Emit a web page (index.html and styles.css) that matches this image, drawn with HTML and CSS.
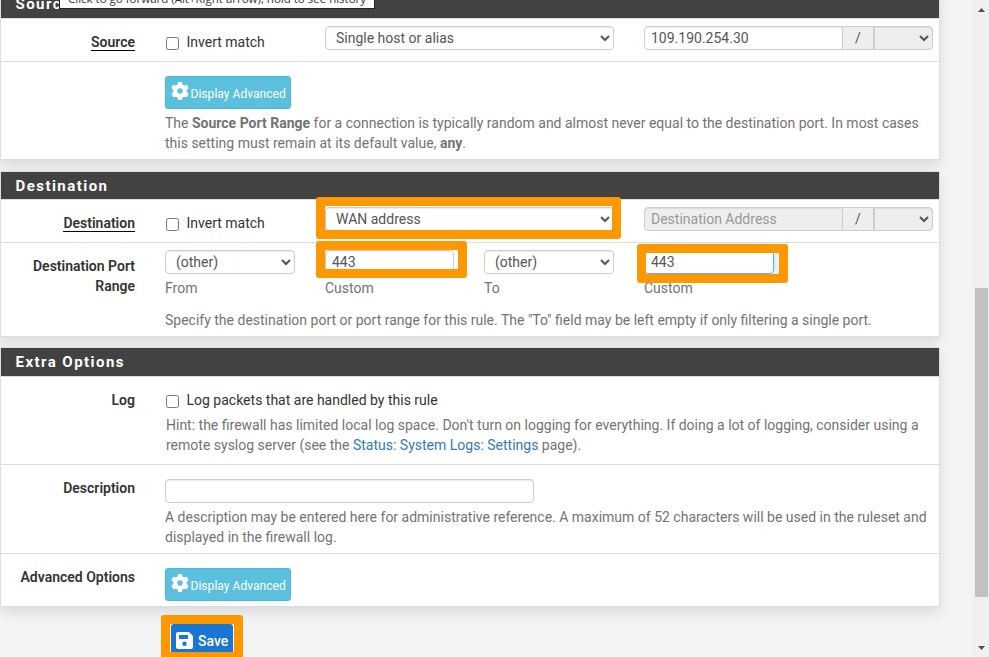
FILE: index.html
```html
<!DOCTYPE html>
<html lang="en">
<head>
<meta charset="utf-8">
<title>Firewall rule</title>
<link rel="stylesheet" href="styles.css">
</head>
<body>
<svg class="defs" width="0" height="0"><defs>
<symbol id="gear" viewBox="0 0 24 24"><path fill-rule="evenodd" d="M9.300 2.200 9.500 0h5l.8 3.200 2.100 1.300 3.600-.7 2.500 4.300-2.500 2.600v2.600l2.500 2.600-2.500 4.300-3.600-.7-2.100 1.300-.8 3.200h-5l-.8-3.200-2.100-1.300-3.600.7L.5 15.900 3 13.300v-2.600L.5 8.100 3 3.800l3.600.7 2.100-1.300zM12 8.300a3.700 3.700 0 1 0 0 7.400 3.700 3.700 0 0 0 0-7.400z"/></symbol>
</defs></svg>
<div class="page">
<main class="content">
  <section class="panel first">
    <h2>Source</h2>
    <div class="row address">
      <label class="name"><span class="ref">Source</span></label>
      <label class="check"><input type="checkbox"><span>Invert match</span></label>
      <select class="wide"><option>Single host or alias</option></select>
      <div class="group"><input type="text" value="109.190.254.30"><span class="addon">/</span><select disabled></select></div>
    </div>
    <div class="row advanced">
      <span class="name"></span>
      <div class="body">
        <button class="info"><svg><use href="#gear"/></svg><span>Display Advanced</span></button>
        <p class="help">The <b>Source Port Range</b> for a connection is typically random and almost never equal to the destination port. In most cases<br>this setting must remain at its default value, <b>any</b>.</p>
      </div>
    </div>
  </section>

  <section class="panel">
    <h2>Destination</h2>
    <div class="row address">
      <label class="name"><span class="ref">Destination</span></label>
      <label class="check"><input type="checkbox"><span>Invert match</span></label>
      <select class="wide"><option>WAN address</option></select>
      <div class="group"><input type="text" placeholder="Destination Address" disabled><span class="addon">/</span><select disabled></select></div>
    </div>
    <div class="row ports">
      <label class="name">Destination Port<br>Range</label>
      <div class="port"><select><option>(other)</option></select><span class="help">From</span></div>
      <div class="port"><input type="text" value="443"><span class="help">Custom</span></div>
      <div class="port"><select><option>(other)</option></select><span class="help">To</span></div>
      <div class="port"><input type="text" class="focused" value="443"><span class="help">Custom</span></div>
      <p class="help note">Specify the destination port or port range for this rule. The "To" field may be left empty if only filtering a single port.</p>
    </div>
  </section>

  <section class="panel extra">
    <h2>Extra Options</h2>
    <div class="row log">
      <label class="name">Log</label>
      <div class="body">
        <label class="check"><input type="checkbox"><span>Log packets that are handled by this rule</span></label>
        <p class="help">Hint: the firewall has limited local log space. Don't turn on logging for everything. If doing a lot of logging, consider using a<br>remote syslog server (see the <a href="#">Status: System Logs: Settings</a> page).</p>
      </div>
    </div>
    <div class="row description">
      <label class="name">Description</label>
      <div class="body">
        <input type="text">
        <p class="help">A description may be entered here for administrative reference. A maximum of 52 characters will be used in the ruleset and<br>displayed in the firewall log.</p>
      </div>
    </div>
    <div class="row options">
      <span class="name">Advanced Options</span>
      <div class="body"><button class="info"><svg><use href="#gear"/></svg><span>Display Advanced</span></button></div>
    </div>
  </section>
  <button class="save"><svg viewBox="0 0 17 17"><path fill-rule="evenodd" d="M2 0h11l4 4v11a2 2 0 0 1-2 2H2a2 2 0 0 1-2-2V2a2 2 0 0 1 2-2zM3 3v4h9V3zM8.500 9.500a2.200 2.200 0 1 0 0 4.400 2.200 2.200 0 0 0 0-4.400z"/></svg>Save</button>
</main>
<aside class="scrollbar">
  <svg viewBox="0 0 7 4"><path d="M3.500 0 7 4H0z"/></svg>
  <div class="thumb"></div>
  <svg viewBox="0 0 7 4"><path d="M0 0h7L3.500 4z"/></svg>
</aside>
</div>
<div class="mark mark-address"></div>
<div class="mark mark-from"></div>
<div class="mark mark-to"></div>
<div class="mark mark-save"></div>
<div class="tooltip">Click to go forward (Alt+Right arrow), hold to see history</div>
</body>
</html>
```

FILE: styles.css
```css
* { box-sizing: border-box; }
html, body { margin: 0; height: 657px; overflow: hidden; }
body { position: relative; background: #f4f4f4; color: #333; font: 14px/20px Roboto, sans-serif; }
.defs { position: absolute; }
.page { display: flex; height: 657px; overflow: hidden; }
.content { width: 940px; }
.panel { margin: 0 0 11px; border: 1px solid #ddd; background: #fff; box-shadow: 0 6px 12px rgba(0,0,0,.1); }
.panel.first { margin-top: -10px; border-top: 0; }
h2 { margin: 0; height: 28px; padding: 0 14.5px; border-bottom: 1px solid #ddd; background: #424242; background-clip: padding-box; color: #fff; font-size: 15px; line-height: 28px; font-weight: 700; letter-spacing: 1.45px; }
.first h2 { height: 29px; line-height: 29px; }
.extra h2 { height: 29px; line-height: 28px; }
.row { display: grid; grid-template-columns: 134px 130px 289px 289px; column-gap: 30px; align-items: start; align-content: start; border-bottom: 1px solid #ddd; white-space: nowrap; }
.row:last-child { border-bottom: 0; }
.name { text-align: right; font-weight: 600; }
.ref { display: inline-block; line-height: 16px; border-bottom: 1px solid #000; }
.body { grid-column: 2 / -1; }
.check { display: flex; align-items: center; }
.check input { width: 13px; height: 13px; margin: 2px 7.5px 0 1px; }
.help { margin: 0; color: #737373; }
a { color: #337ab7; text-decoration: none; }
input[type=text], select { display: block; width: 100%; height: 24px; margin: 0; border: 1px solid #ccc; border-radius: 4px; background: #fff; color: #555; font: inherit; box-shadow: inset 0 1px 1px rgba(0,0,0,.075); outline: 0; }
input[type=text] { padding: 0 6px; }
select { padding: 0 2px 0 6px; }
input::placeholder { color: #999; }
input:disabled, select:disabled { background-color: #eee; opacity: 1; }
.address { height: 43px; }
.address .name, .address > .check { height: 20px; margin-top: 13px; }
.address > select, .group { margin-top: 7px; }
.group { display: flex; }
.group input[type=text] { width: 199px; border-radius: 4px 0 0 4px; }
.addon { width: 31px; height: 24px; border: solid #ccc; border-width: 1px 1px 1px 0; background: #eee; color: #555; text-align: center; line-height: 22px; }
.group select { width: 59px; border-radius: 0 4px 4px 0; }
.advanced { height: 97px; padding-top: 14px; }
button { font-family: inherit; cursor: pointer; }
.info { display: flex; align-items: center; width: 126px; height: 33px; padding: 2px 0 0 5px; border: 1px solid #46b8da; border-radius: 3px; background: #5bc0de; color: #fff; font-size: 12px; font-weight: 400; letter-spacing: .04px; white-space: nowrap; }
.info svg { width: 18px; height: 18px; margin: -6px 2px 0 -.5px; fill: #fff; flex: none; }
.advanced .help { margin-top: 4px; }
.ports { grid-template-columns: 134px 130px 129px 130px 130px; height: 93px; padding-top: 7px; }
.ports .name { margin-top: 6px; height: 40px; }
.port { height: 49px; }
.port .help { display: block; margin-top: 4px; }
.ports .note { grid-column: 2 / -1; margin-top: 11px; }
.port .focused { border-color: #66afe9; box-shadow: inset 0 1px 1px rgba(0,0,0,.075), 0 0 8px rgba(102,175,233,.6); }
.panel.extra { margin-top: -1px; }
.log { height: 88px; padding-top: 13px; }
.log .check input { margin-top: 3px; }
.log .help { margin: 5px 0 0 1px; }
.description { height: 89px; padding-top: 14px; }
.description .name { margin-top: -1px; }
.description input[type=text] { width: 369px; }
.description .help { margin-top: 4px; }
.options { height: 52px; padding-top: 14px; }
.options .name { margin-top: -1px; }
.save { display: flex; align-items: center; width: 62px; height: 33px; margin: 17px 0 0 171px; padding: 0 0 0 5px; border: 0; border-radius: 3px; background: #1976d2; color: #fff; font-size: 14px; font-weight: 500; }
.save svg { width: 17px; height: 17px; margin-right: 5px; fill: #fff; }
.scrollbar { display: flex; flex-direction: column; align-items: center; width: 16px; height: 657px; margin-left: 33px; padding: 8px 0 7px; background: #f0f0f0; }
.scrollbar svg { width: 7px; height: 4px; fill: #505050; flex: none; }
.thumb { width: 13px; height: 309px; margin: 276px 0 auto 1px; background: #c1c1c1; }
.mark { position: absolute; border: 9px solid #ff9800; border-radius: 3px; pointer-events: none; }
.mark-address { left: 316px; top: 197px; width: 305px; height: 42px; }
.mark-from { left: 316px; top: 241px; width: 151px; height: 37px; }
.mark-to { left: 637px; top: 244px; width: 151px; height: 39px; }
.mark-save { left: 161px; top: 615px; width: 82px; height: 46px; }
.tooltip { position: absolute; left: 59px; top: -12px; width: 316px; height: 21px; border: 1px solid #222; background: #fff; color: #333; padding-left: 8px; font: 11.5px/19px "Open Sans", sans-serif; white-space: nowrap; }
```
